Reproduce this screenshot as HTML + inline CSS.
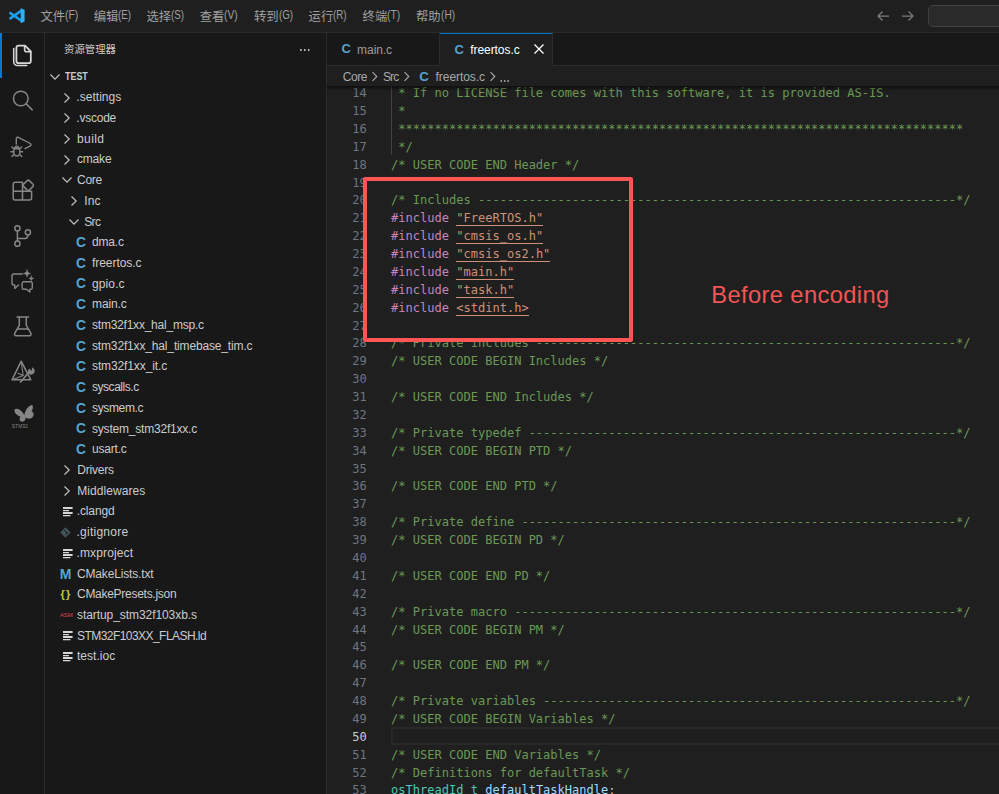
<!DOCTYPE html>
<html lang="zh-CN">
<head>
<meta charset="utf-8">
<title>freertos.c - test - Visual Studio Code</title>
<style>
*{box-sizing:border-box;margin:0;padding:0}
html,body{width:999px;height:794px;overflow:hidden;background:#1f1f1f}
body{position:relative;font-family:"Liberation Sans","Noto Sans CJK SC",sans-serif;color:#ccc;font-size:12.2px}
.abs{position:absolute}
#title{left:0;top:0;width:999px;height:33px;background:#1f1f1f;border-bottom:1px solid #2b2b2b}
.menu{position:absolute;top:0.5px;height:32px;line-height:32px;font-size:12.3px;color:#a0a0a0;white-space:nowrap}
.menu i{font-style:normal;font-size:12.6px;display:inline-block;transform-origin:0 50%;position:absolute;top:-1.3px}
#act{left:0;top:33px;width:45px;height:761px;background:#181818;border-right:1px solid #2b2b2b}
#side{left:45px;top:33px;width:282px;height:761px;background:#181818;border-right:1px solid #2b2b2b}
#tabs{left:327px;top:33px;width:672px;height:33px;background:#181818;border-bottom:1px solid #2b2b2b}
#crumbs{left:327px;top:66px;width:672px;height:20px;background:#1f1f1f;font-size:12.2px;color:#a9a9a9}
#editor{left:327px;top:86px;width:672px;height:708px;background:#1f1f1f;overflow:hidden}
.row{position:absolute;left:0;width:281px;height:20.71px;line-height:20.71px;white-space:nowrap;font-size:12px;color:#ccc}
.row .tx{position:absolute;top:0}
.row svg{position:absolute}
.ci{position:absolute;font-weight:bold;color:#55a4d2;font-size:13.8px;top:0.8px}
.ln{position:absolute;left:0;width:39.8px;text-align:right;color:#6e7681;white-space:pre}
.cl{position:absolute;left:64px;white-space:pre}
.code,.code div{font-family:"DejaVu Sans Mono","Liberation Mono",monospace;font-size:12.04px;letter-spacing:0;height:17.88px;line-height:17.88px}
.c{color:#6a9955}.k{color:#c586c0}.s{color:#ce9178}.t{color:#4ec9b0}.v{color:#9cdcfe}.p{color:#ccc}
.u{border-bottom:1px solid #ce9178}
</style>
</head>
<body>
<div id="title" class="abs">
<svg class="abs" style="left:9px;top:8px" width="15.600" height="15.400" viewBox="0 0 100 100" preserveAspectRatio="none"><path d="M80 17L9 67M80 83L9 33" stroke="#1b9ee9" stroke-width="17" stroke-linecap="round" fill="none"/><path d="M75 1L100 12V88L75 99Z" fill="#2db2f8"/></svg>
<div class="menu" style="left:40.4px">文件<i style="transform:scaleX(0.826)">(F)</i></div>
<div class="menu" style="left:93.7px">编辑<i style="transform:scaleX(0.78)">(E)</i></div>
<div class="menu" style="left:146.5px">选择<i style="transform:scaleX(0.78)">(S)</i></div>
<div class="menu" style="left:199.8px">查看<i style="transform:scaleX(0.81)">(V)</i></div>
<div class="menu" style="left:254px">转到<i style="transform:scaleX(0.775)">(G)</i></div>
<div class="menu" style="left:308.6px">运行<i style="transform:scaleX(0.778)">(R)</i></div>
<div class="menu" style="left:362.6px">终端<i style="transform:scaleX(0.814)">(T)</i></div>
<div class="menu" style="left:416px">帮助<i style="transform:scaleX(0.806)">(H)</i></div>
<svg class="abs" style="left:875.500px;top:9px" width="15" height="14" viewBox="0 0 15 14"><path d="M13 7H2.500M6.500 2.500L2 7l4.500 4.500" fill="none" stroke="#7c7c7c" stroke-width="1.25"/></svg>
<svg class="abs" style="left:900px;top:9px" width="15" height="14" viewBox="0 0 15 14"><path d="M2 7h10.500M8.500 2.500L13 7l-4.500 4.500" fill="none" stroke="#7c7c7c" stroke-width="1.25"/></svg>
<div class="abs" style="left:927.500px;top:4.500px;width:90px;height:22.600px;background:#2a2a2a;border:1px solid #404040;border-radius:5px"></div>
</div>
<div id="act" class="abs">
<div class="abs" style="left:0;top:0;width:2px;height:45px;background:#0078d4"></div>
<svg class="abs" style="left:0;top:0" width="44" height="420" viewBox="0 33 44 420" fill="none" stroke-linecap="round" stroke-linejoin="round">
<g stroke="#d7d7d7"><path d="M18.600 45.700h6.400l5.800 5.800v9.500a2.200 2.200 0 0 1-2.200 2.200h-10a2.200 2.200 0 0 1-2.200-2.200v-13.100a2.200 2.200 0 0 1 2.200-2.200z" stroke-width="1.800"/><path d="M24.600 45.800v4a2 2 0 0 0 2 2h4" stroke-width="1.600"/><path d="M13.700 48.400v13.400a3.800 3.800 0 0 0 3.800 3.800h9.300" stroke-width="1.500"/></g>
<g stroke="#868686" stroke-width="1.5"><circle cx="20.800" cy="98.500" r="7.300"/><path d="M26.200 103.900l6 6"/></g>
<g stroke="#868686" stroke-width="1.400"><path d="M16.300 144v-5.600a1.300 1.300 0 0 1 2-1.100l12 6.200a1.300 1.300 0 0 1 0 2.300l-5.300 2.800"/><ellipse cx="16.800" cy="151.800" rx="3.100" ry="4.200"/><path d="M14.400 148.800h4.800M13.700 151.800h-2.700M13.900 149l-2-2M13.900 154.600l-2 2M19.900 151.800h2.700M19.700 149l2-2M19.700 154.600l2 2M14.700 147.700a2.200 2.200 0 0 1 4.200 0"/></g>
<g stroke="#868686" stroke-width="1.500"><path d="M15.200 182.300h7.300v17.800h-7.300a2 2 0 0 1-2-2v-13.800a2 2 0 0 1 2-2zM13.200 191.200h18.400v6.900a2 2 0 0 1-2 2h-7.100"/><path d="M27.200 180.600a1.500 1.500 0 0 1 2.100 0l3.700 3.700a1.500 1.500 0 0 1 0 2.100l-3.700 3.700a1.500 1.500 0 0 1-2.100 0l-3.700-3.700a1.500 1.500 0 0 1 0-2.100z" fill="#181818"/></g>
<g stroke="#868686" stroke-width="1.500"><circle cx="17.400" cy="228.300" r="2.600"/><circle cx="17.400" cy="243.700" r="2.600"/><circle cx="27.900" cy="232.300" r="2.600"/><path d="M17.400 230.900v10.200M27.900 234.900v0.600a3 3 0 0 1-3 3h-7.500"/></g>
<g stroke="#868686" stroke-width="1.400"><path d="M22.300 274h-8.300a2 2 0 0 0-2 2v7a2 2 0 0 0 2 2h0.700v3.600l3.900-3.600"/><path d="M23.700 281.700h7a1.600 1.600 0 0 1 1.600 1.600v4.400a1.600 1.600 0 0 1-1.600 1.600h-0.900v2.700l-3.200-2.700h-2.900a1.600 1.600 0 0 1-1.600-1.600v-4.400a1.600 1.600 0 0 1 1.600-1.600z"/><path d="M27 269.800c0.400 2.400 1.300 3.300 3.700 3.700c-2.400 0.400-3.300 1.300-3.700 3.700c-0.400-2.400-1.300-3.300-3.700-3.700c2.400-0.400 3.300-1.300 3.700-3.700zM31.300 276c0.300 1.500 0.900 2.100 2.400 2.400c-1.500 0.300-2.100 0.900-2.400 2.400c-0.300-1.500-0.900-2.100-2.400-2.400c1.500-0.300 2.100-0.900 2.400-2.400z" stroke-width="0.500" fill="#868686"/></g>
<g stroke="#868686" stroke-width="1.500"><path d="M17 317h11.600M19.300 317v8.300l-4.600 8a1.600 1.600 0 0 0 1.400 2.400h13.400a1.600 1.600 0 0 0 1.400-2.400l-4.600-8v-8.300M17.300 329h11"/></g>
<g stroke="#868686" stroke-width="1.500"><path d="M21.200 361.200l-9.200 18.600h18.800z"/><path d="M21.500 363.500l1.700 12M23.200 375.500l-9.500 3.700M23.200 375.500l-5.200-2.300" stroke-width="1.100"/><path d="M20.600 382l8.700-10.200" stroke-width="1.700"/><path d="M29.600 373.700a3 3 0 0 1-0.200-4.300l1.700 1.900l1.900-0.800l-0.600-2.300a3 3 0 0 1 0.500 5.200a3 3 0 0 1-3.300 0.300z" stroke-width="1.200" fill="#868686"/></g>
<path d="M24.300 415.200C25 411 27.500 406.500 31 405.200C33.500 404.300 33.400 408.500 31.600 411.600C34.200 412 34.400 416.500 31.600 418C29.500 419.200 27 418.600 25.600 417.600C25.800 419.500 24.500 421.600 22.300 421.700C19.800 421.800 18.600 419.300 20.600 416.600C17.500 416 14.600 413.200 14.400 410.600C14.200 408.400 16.800 408 19.300 409.600C21.600 411 23.300 413.200 24.300 415.200Z" fill="#868686" stroke="none"/>
<text x="11.800" y="428" font-family="Liberation Sans, sans-serif" font-size="5.700" fill="#868686" stroke="none" textLength="16" lengthAdjust="spacingAndGlyphs">STM32</text>
</svg>
</div>
<div id="side" class="abs">
<div class="abs" style="left:19px;top:9.500px;font-size:10.400px;line-height:14px;color:#ccc;white-space:nowrap">资源管理器</div>
<svg class="abs" style="left:254px;top:13.900px" width="13" height="6" viewBox="0 0 13 6"><circle cx="1.900" cy="3" r="0.950" fill="#ccc"/><circle cx="5.800" cy="3" r="0.950" fill="#ccc"/><circle cx="9.700" cy="3" r="0.950" fill="#ccc"/></svg>
<div class="row" style="top:33.54px"><svg style="left:3.6px;top:6.36px" width="12" height="8" viewBox="0 0 12 8"><path d="M1.500 1.500l4.500 4.700l4.500-4.700" fill="none" stroke="#c5c5c5" stroke-width="1.150"/></svg><span class="tx" style="left:19.5px;top:0.200px;font-size:10.400px;font-weight:bold;transform:scaleX(0.858);transform-origin:0 50%">TEST</span></div>
<div class="row" style="top:54.25px"><svg style="left:18.0px;top:4.36px" width="8" height="12" viewBox="0 0 8 12"><path d="M1.500 1.500l4.700 4.500l-4.700 4.500" fill="none" stroke="#c5c5c5" stroke-width="1.150"/></svg><span class="tx" style="left:31.3px;letter-spacing:0.037px">.settings</span></div>
<div class="row" style="top:74.97px"><svg style="left:18.0px;top:4.36px" width="8" height="12" viewBox="0 0 8 12"><path d="M1.500 1.500l4.700 4.500l-4.700 4.500" fill="none" stroke="#c5c5c5" stroke-width="1.150"/></svg><span class="tx" style="left:31.3px;letter-spacing:-0.227px">.vscode</span></div>
<div class="row" style="top:95.67px"><svg style="left:18.0px;top:4.36px" width="8" height="12" viewBox="0 0 8 12"><path d="M1.500 1.500l4.700 4.500l-4.700 4.500" fill="none" stroke="#c5c5c5" stroke-width="1.150"/></svg><span class="tx" style="left:32.0px;letter-spacing:0.41px">build</span></div>
<div class="row" style="top:116.38px"><svg style="left:18.0px;top:4.36px" width="8" height="12" viewBox="0 0 8 12"><path d="M1.500 1.500l4.700 4.500l-4.700 4.500" fill="none" stroke="#c5c5c5" stroke-width="1.150"/></svg><span class="tx" style="left:32.0px;letter-spacing:-0.186px">cmake</span></div>
<div class="row" style="top:137.09px"><svg style="left:16.0px;top:6.36px" width="12" height="8" viewBox="0 0 12 8"><path d="M1.500 1.500l4.500 4.700l4.500-4.700" fill="none" stroke="#c5c5c5" stroke-width="1.150"/></svg><span class="tx" style="left:32.0px;letter-spacing:-0.272px">Core</span></div>
<div class="row" style="top:157.81px"><svg style="left:25.0px;top:4.36px" width="8" height="12" viewBox="0 0 8 12"><path d="M1.500 1.500l4.700 4.500l-4.700 4.500" fill="none" stroke="#c5c5c5" stroke-width="1.150"/></svg><span class="tx" style="left:39.2px;letter-spacing:0.192px">Inc</span></div>
<div class="row" style="top:178.51px"><svg style="left:23.0px;top:6.36px" width="12" height="8" viewBox="0 0 12 8"><path d="M1.500 1.500l4.500 4.700l4.500-4.700" fill="none" stroke="#c5c5c5" stroke-width="1.150"/></svg><span class="tx" style="left:39.2px;letter-spacing:-0.6px">Src</span></div>
<div class="row" style="top:199.22px"><span class="ci" style="left:30.9px">C</span><span class="tx" style="left:47.0px;letter-spacing:-0.172px">dma.c</span></div>
<div class="row" style="top:219.94px"><span class="ci" style="left:30.9px">C</span><span class="tx" style="left:47.0px;letter-spacing:-0.046px">freertos.c</span></div>
<div class="row" style="top:240.65px"><span class="ci" style="left:30.9px">C</span><span class="tx" style="left:47.0px;letter-spacing:0.114px">gpio.c</span></div>
<div class="row" style="top:261.36px"><span class="ci" style="left:30.9px">C</span><span class="tx" style="left:47.0px;letter-spacing:-0.109px">main.c</span></div>
<div class="row" style="top:282.06px"><span class="ci" style="left:30.9px">C</span><span class="tx" style="left:47.0px;letter-spacing:-0.226px">stm32f1xx_hal_msp.c</span></div>
<div class="row" style="top:302.78px"><span class="ci" style="left:30.9px">C</span><span class="tx" style="left:47.0px;letter-spacing:-0.154px">stm32f1xx_hal_timebase_tim.c</span></div>
<div class="row" style="top:323.49px"><span class="ci" style="left:30.9px">C</span><span class="tx" style="left:47.0px;letter-spacing:-0.116px">stm32f1xx_it.c</span></div>
<div class="row" style="top:344.20px"><span class="ci" style="left:30.9px">C</span><span class="tx" style="left:47.0px;letter-spacing:-0.46px">syscalls.c</span></div>
<div class="row" style="top:364.91px"><span class="ci" style="left:30.9px">C</span><span class="tx" style="left:47.0px;letter-spacing:-0.343px">sysmem.c</span></div>
<div class="row" style="top:385.62px"><span class="ci" style="left:30.9px">C</span><span class="tx" style="left:47.0px;letter-spacing:-0.206px">system_stm32f1xx.c</span></div>
<div class="row" style="top:406.33px"><span class="ci" style="left:30.9px">C</span><span class="tx" style="left:47.0px;letter-spacing:-0.203px">usart.c</span></div>
<div class="row" style="top:427.04px"><svg style="left:18.0px;top:4.36px" width="8" height="12" viewBox="0 0 8 12"><path d="M1.500 1.500l4.700 4.500l-4.700 4.500" fill="none" stroke="#c5c5c5" stroke-width="1.150"/></svg><span class="tx" style="left:32.2px;letter-spacing:-0.2px">Drivers</span></div>
<div class="row" style="top:447.75px"><svg style="left:18.0px;top:4.36px" width="8" height="12" viewBox="0 0 8 12"><path d="M1.500 1.500l4.700 4.500l-4.700 4.500" fill="none" stroke="#c5c5c5" stroke-width="1.150"/></svg><span class="tx" style="left:32.2px;letter-spacing:0.064px">Middlewares</span></div>
<div class="row" style="top:468.46px"><svg style="left:18.0px;top:5.66px" width="10" height="10" viewBox="0 0 10 10"><path d="M0 1h9.600M0 6h9.600" stroke="#d4d7d6" stroke-width="1.800" fill="none"/><path d="M0 3.600h6M0 8.600h7.400" stroke="#d4d7d6" stroke-width="1.300" fill="none"/></svg><span class="tx" style="left:31.7px;letter-spacing:-0.117px">.clangd</span></div>
<div class="row" style="top:489.17px"><svg style="left:15.0px;top:4.86px" width="11" height="11" viewBox="0 0 11 11"><path d="M5.500 0.300l5.200 5.200l-5.200 5.200l-5.200-5.200z" fill="#41535b"/><path d="M4 3l2.500 2.500v2.500M6.500 5.500h1.500" stroke="#181818" stroke-width="0.900" fill="none"/></svg><span class="tx" style="left:31.5px;letter-spacing:0.247px">.gitignore</span></div>
<div class="row" style="top:509.88px"><svg style="left:18.0px;top:5.66px" width="10" height="10" viewBox="0 0 10 10"><path d="M0 1h9.600M0 6h9.600" stroke="#d4d7d6" stroke-width="1.800" fill="none"/><path d="M0 3.600h6M0 8.600h7.400" stroke="#d4d7d6" stroke-width="1.300" fill="none"/></svg><span class="tx" style="left:31.5px;letter-spacing:0.138px">.mxproject</span></div>
<div class="row" style="top:530.59px"><span style="position:absolute;left:14.7px;top:0;font-weight:bold;color:#55a4d2;font-size:14px;letter-spacing:0">M</span><span class="tx" style="left:32.0px;letter-spacing:-0.161px">CMakeLists.txt</span></div>
<div class="row" style="top:551.29px"><span style="position:absolute;left:15.5px;top:-0.500px;font-weight:bold;color:#cbcb41;font-size:11px;letter-spacing:1.200px">{}</span><span class="tx" style="left:32.0px;letter-spacing:-0.278px">CMakePresets.json</span></div>
<div class="row" style="top:572.00px"><span style="position:absolute;left:15.0px;top:0;color:#e0454b;font-size:6px;letter-spacing:-0.150px">ASM</span><span class="tx" style="left:32.0px;letter-spacing:-0.07px">startup_stm32f103xb.s</span></div>
<div class="row" style="top:592.72px"><svg style="left:18.0px;top:5.66px" width="10" height="10" viewBox="0 0 10 10"><path d="M0 1h9.600M0 6h9.600" stroke="#d4d7d6" stroke-width="1.800" fill="none"/><path d="M0 3.600h6M0 8.600h7.400" stroke="#d4d7d6" stroke-width="1.300" fill="none"/></svg><span class="tx" style="left:32.0px;letter-spacing:-0.551px">STM32F103XX_FLASH.ld</span></div>
<div class="row" style="top:613.42px"><svg style="left:18.0px;top:5.66px" width="10" height="10" viewBox="0 0 10 10"><path d="M0 1h9.600M0 6h9.600" stroke="#d4d7d6" stroke-width="1.800" fill="none"/><path d="M0 3.600h6M0 8.600h7.400" stroke="#d4d7d6" stroke-width="1.300" fill="none"/></svg><span class="tx" style="left:32.0px;letter-spacing:0.026px">test.ioc</span></div>
</div>
<div id="tabs" class="abs">
<div class="abs" style="left:0;top:0;width:113px;height:32px;border-right:1px solid #2b2b2b;line-height:32px;font-size:12px;white-space:nowrap">
<span class="abs" style="left:14.600px;top:0.300px;font-weight:bold;color:#55a4d2;font-size:13px">C</span>
<span class="abs" style="left:30.100px;top:1.300px;color:#9d9d9d;letter-spacing:-0.069px">main.c</span>
</div>
<div class="abs" style="left:113px;top:0;width:113px;height:33px;background:#1f1f1f;border-top:1px solid #0078d4;border-right:1px solid #2b2b2b;line-height:31px;font-size:12px;white-space:nowrap">
<span class="abs" style="left:14.400px;top:0.300px;font-weight:bold;color:#55a4d2;font-size:13px">C</span>
<span class="abs" style="left:30.200px;top:1.300px;color:#fff;letter-spacing:-0.057px">freertos.c</span>
<svg class="abs" style="left:93px;top:9.300px" width="12" height="12" viewBox="0 0 12 12"><path d="M1.500 1.500l9 9M10.500 1.500l-9 9" stroke="#fff" stroke-width="1.300" fill="none"/></svg>
</div>
</div>
<div id="crumbs" class="abs" style="line-height:22px;white-space:nowrap">
<span class="abs" style="left:15.7px;top:0;font-size:12px;color:#a9a9a9;letter-spacing:-0.405px">Core</span>
<svg class="abs" style="left:44.0px;top:5.10px" width="8" height="11" viewBox="0 0 8 11"><path d="M1.500 1.200l4.300 4.300l-4.300 4.300" fill="none" stroke="#a9a9a9" stroke-width="1.100"/></svg>
<span class="abs" style="left:55.9px;top:0;font-size:12px;color:#a9a9a9;letter-spacing:-0.85px">Src</span>
<svg class="abs" style="left:76.0px;top:5.10px" width="8" height="11" viewBox="0 0 8 11"><path d="M1.500 1.200l4.300 4.300l-4.300 4.300" fill="none" stroke="#a9a9a9" stroke-width="1.100"/></svg>
<span class="abs" style="left:92.3px;top:0;font-weight:bold;color:#55a4d2;font-size:13.300px">C</span>
<span class="abs" style="left:108.6px;top:0;font-size:12px;color:#a9a9a9;letter-spacing:-0.068px">freertos.c</span>
<svg class="abs" style="left:162.0px;top:5.10px" width="8" height="11" viewBox="0 0 8 11"><path d="M1.500 1.200l4.300 4.300l-4.300 4.300" fill="none" stroke="#a9a9a9" stroke-width="1.100"/></svg>
<svg class="abs" style="left:173px;top:13px" width="10" height="4" viewBox="0 0 10 4"><circle cx="1.300" cy="2" r="0.900" fill="#a9a9a9"/><circle cx="4.700" cy="2" r="0.900" fill="#a9a9a9"/><circle cx="8.100" cy="2" r="0.900" fill="#a9a9a9"/></svg>
</div>
<div id="editor" class="abs code">
<div class="abs" style="left:64px;top:641px;width:620px;height:18px;border:2px solid #282828"></div>
<div class="abs" style="left:64px;top:0;width:1px;height:68.5px;background:#404040"></div>
<div class="ln" style="top:-0.90px">14</div>
<div class="cl" style="top:-0.90px"><span class="c"> * If no LICENSE file comes with this software, it is provided AS-IS.</span></div>
<div class="ln" style="top:16.98px">15</div>
<div class="cl" style="top:16.98px"><span class="c"> *</span></div>
<div class="ln" style="top:34.86px">16</div>
<div class="cl" style="top:34.86px"><span class="c"> ******************************************************************************</span></div>
<div class="ln" style="top:52.74px">17</div>
<div class="cl" style="top:52.74px"><span class="c"> */</span></div>
<div class="ln" style="top:70.62px">18</div>
<div class="cl" style="top:70.62px"><span class="c">/* USER CODE END Header */</span></div>
<div class="ln" style="top:88.50px">19</div>
<div class="ln" style="top:106.38px">20</div>
<div class="cl" style="top:106.38px"><span class="c">/* Includes ------------------------------------------------------------------*/</span></div>
<div class="ln" style="top:124.26px">21</div>
<div class="cl" style="top:124.26px"><span class="k">#include</span><span class="p"> </span><span class="s u">"FreeRTOS.h"</span></div>
<div class="ln" style="top:142.14px">22</div>
<div class="cl" style="top:142.14px"><span class="k">#include</span><span class="p"> </span><span class="s u">"cmsis_os.h"</span></div>
<div class="ln" style="top:160.02px">23</div>
<div class="cl" style="top:160.02px"><span class="k">#include</span><span class="p"> </span><span class="s u">"cmsis_os2.h"</span></div>
<div class="ln" style="top:177.90px">24</div>
<div class="cl" style="top:177.90px"><span class="k">#include</span><span class="p"> </span><span class="s u">"main.h"</span></div>
<div class="ln" style="top:195.78px">25</div>
<div class="cl" style="top:195.78px"><span class="k">#include</span><span class="p"> </span><span class="s u">"task.h"</span></div>
<div class="ln" style="top:213.66px">26</div>
<div class="cl" style="top:213.66px"><span class="k">#include</span><span class="p"> </span><span class="s u">&lt;stdint.h&gt;</span></div>
<div class="ln" style="top:231.54px">27</div>
<div class="ln" style="top:249.42px">28</div>
<div class="cl" style="top:249.42px"><span class="c">/* Private includes ----------------------------------------------------------*/</span></div>
<div class="ln" style="top:267.30px">29</div>
<div class="cl" style="top:267.30px"><span class="c">/* USER CODE BEGIN Includes */</span></div>
<div class="ln" style="top:285.18px">30</div>
<div class="ln" style="top:303.06px">31</div>
<div class="cl" style="top:303.06px"><span class="c">/* USER CODE END Includes */</span></div>
<div class="ln" style="top:320.94px">32</div>
<div class="ln" style="top:338.82px">33</div>
<div class="cl" style="top:338.82px"><span class="c">/* Private typedef -----------------------------------------------------------*/</span></div>
<div class="ln" style="top:356.70px">34</div>
<div class="cl" style="top:356.70px"><span class="c">/* USER CODE BEGIN PTD */</span></div>
<div class="ln" style="top:374.58px">35</div>
<div class="ln" style="top:392.46px">36</div>
<div class="cl" style="top:392.46px"><span class="c">/* USER CODE END PTD */</span></div>
<div class="ln" style="top:410.34px">37</div>
<div class="ln" style="top:428.22px">38</div>
<div class="cl" style="top:428.22px"><span class="c">/* Private define ------------------------------------------------------------*/</span></div>
<div class="ln" style="top:446.10px">39</div>
<div class="cl" style="top:446.10px"><span class="c">/* USER CODE BEGIN PD */</span></div>
<div class="ln" style="top:463.98px">40</div>
<div class="ln" style="top:481.86px">41</div>
<div class="cl" style="top:481.86px"><span class="c">/* USER CODE END PD */</span></div>
<div class="ln" style="top:499.74px">42</div>
<div class="ln" style="top:517.62px">43</div>
<div class="cl" style="top:517.62px"><span class="c">/* Private macro -------------------------------------------------------------*/</span></div>
<div class="ln" style="top:535.50px">44</div>
<div class="cl" style="top:535.50px"><span class="c">/* USER CODE BEGIN PM */</span></div>
<div class="ln" style="top:553.38px">45</div>
<div class="ln" style="top:571.26px">46</div>
<div class="cl" style="top:571.26px"><span class="c">/* USER CODE END PM */</span></div>
<div class="ln" style="top:589.14px">47</div>
<div class="ln" style="top:607.02px">48</div>
<div class="cl" style="top:607.02px"><span class="c">/* Private variables ---------------------------------------------------------*/</span></div>
<div class="ln" style="top:624.90px">49</div>
<div class="cl" style="top:624.90px"><span class="c">/* USER CODE BEGIN Variables */</span></div>
<div class="ln" style="top:642.78px;color:#ccc">50</div>
<div class="ln" style="top:660.66px">51</div>
<div class="cl" style="top:660.66px"><span class="c">/* USER CODE END Variables */</span></div>
<div class="ln" style="top:678.54px">52</div>
<div class="cl" style="top:678.54px"><span class="c">/* Definitions for defaultTask */</span></div>
<div class="ln" style="top:696.42px">53</div>
<div class="cl" style="top:696.42px"><span class="t">osThreadId_t</span><span class="p"> </span><span class="v">defaultTaskHandle</span><span class="p">;</span></div>
<div class="abs" style="left:0;top:0;width:672px;height:5px;background:linear-gradient(rgba(0,0,0,0.55),rgba(0,0,0,0))"></div>
</div>
<div class="abs code" style="left:363px;top:177px;width:270px;height:165.400px;border:4px solid #ff5555;border-radius:2px;background:#1f1f1f;overflow:hidden">
<div class="cl" style="left:24px;top:11.38px"><span class="c">/* Includes ------------------------------------------------------------------*/</span></div>
<div class="cl" style="left:24px;top:29.26px"><span class="k">#include</span><span class="p"> </span><span class="s u">"FreeRTOS.h"</span></div>
<div class="cl" style="left:24px;top:47.14px"><span class="k">#include</span><span class="p"> </span><span class="s u">"cmsis_os.h"</span></div>
<div class="cl" style="left:24px;top:65.02px"><span class="k">#include</span><span class="p"> </span><span class="s u">"cmsis_os2.h"</span></div>
<div class="cl" style="left:24px;top:82.90px"><span class="k">#include</span><span class="p"> </span><span class="s u">"main.h"</span></div>
<div class="cl" style="left:24px;top:100.78px"><span class="k">#include</span><span class="p"> </span><span class="s u">"task.h"</span></div>
<div class="cl" style="left:24px;top:118.66px"><span class="k">#include</span><span class="p"> </span><span class="s u">&lt;stdint.h&gt;</span></div>
</div>
<div class="abs" style="left:711.300px;top:279.800px;font-size:23.700px;line-height:30px;color:#f25555;white-space:nowrap;letter-spacing:0.380px">Before encoding</div>
</body>
</html>
